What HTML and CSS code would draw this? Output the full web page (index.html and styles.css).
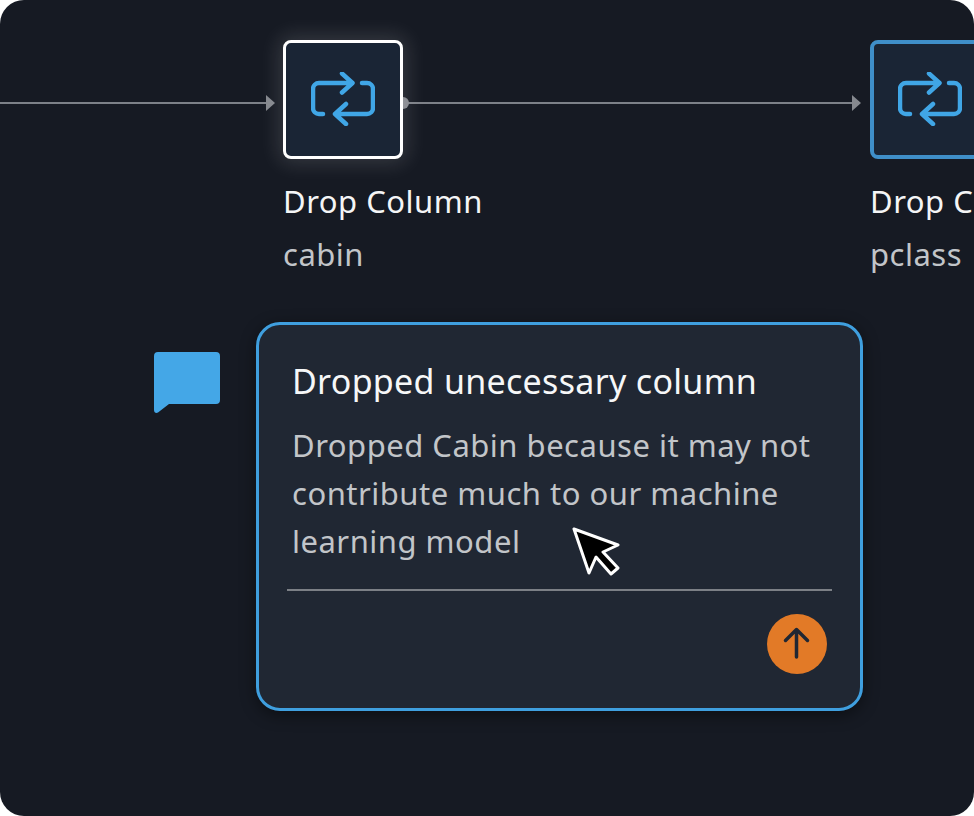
FILE: index.html
```html
<!DOCTYPE html>
<html lang="en">
<head>
<meta charset="utf-8">
<title>Drop Column</title>
<link rel="stylesheet" href="styles.css">
</head>
<body>
<main class="canvas">
  <svg class="edges" width="974" height="816" viewBox="0 0 974 816" aria-hidden="true">
    <path class="edge" d="M0 103H268M408 103H854"/>
    <path class="head" d="M266 95l9 8-9 8zM852 95l9 8-9 8z"/>
    <path class="head" d="M403 97a6 6 0 0 1 0 12z"/>
  </svg>

  <section class="node node-first">
    <div class="node-box node-box-selected">
      <svg class="swap" viewBox="0 0 64 54"><path d="M12 42H8a6 6 0 0 1-6-6V17a6 6 0 0 1 6-6H41M31 1.500l10.500 9.500-10.500 9.500M51 11h5a6 6 0 0 1 6 6V36a6 6 0 0 1-6 6H24M35 32l-11 10 11 10"/></svg>
    </div>
    <div class="node-title">Drop Column</div>
    <div class="node-sub">cabin</div>
  </section>

  <section class="node node-second">
    <div class="node-box node-box-idle">
      <svg class="swap" viewBox="0 0 64 54"><path d="M12 42H8a6 6 0 0 1-6-6V17a6 6 0 0 1 6-6H41M31 1.500l10.500 9.500-10.500 9.500M51 11h5a6 6 0 0 1 6 6V36a6 6 0 0 1-6 6H24M35 32l-11 10 11 10"/></svg>
    </div>
    <div class="node-title">Drop Column</div>
    <div class="node-sub">pclass</div>
  </section>

  <svg class="bubble" viewBox="0 0 66 61" aria-hidden="true"><path d="M4 0H62a4 4 0 0 1 4 4V48a4 4 0 0 1-4 4H15L4 60.500C2 61.500 0 60.500 0 58V4a4 4 0 0 1 4-4z"/></svg>

  <article class="note">
    <h2 class="note-title">Dropped unecessary column</h2>
    <p class="note-body">Dropped Cabin because it may not contribute much to our machine learning model</p>
    <hr class="note-rule">
    <div class="note-actions">
      <button class="send" type="button" aria-label="Send">
        <svg viewBox="0 0 60 60" width="60" height="60"><path d="M29.500 43V15.500M18.500 26.500l11-11 11 11"/></svg>
      </button>
    </div>
  </article>

  <svg class="cursor" viewBox="0 0 50 50" aria-hidden="true"><path d="M3 3L47 19 32 26 47 42 40 48 25 31 18 47z"/></svg>
</main>
</body>
</html>
```
FILE: styles.css
```css
* { box-sizing: border-box; }
html, body { margin: 0; padding: 0; background: #fff; }
body { width: 974px; height: 816px; overflow: hidden; font-family: "Noto Sans", "Open Sans", sans-serif; }

.canvas {
  position: relative;
  width: 974px;
  height: 816px;
  overflow: hidden;
  background: #161a23;
  border-radius: 24px;
  color: #fff;
}

.edges { position: absolute; left: 0; top: 0; }
.edge { fill: none; stroke: #7d8188; stroke-width: 2; }
.head { fill: #85888e; }

.node { position: absolute; top: 40px; width: 240px; }
.node-first { left: 283px; }
.node-second { left: 870px; }

.node-box {
  display: flex;
  align-items: center;
  justify-content: center;
  width: 120px;
  height: 119px;
  background: #1a2535;
  border-radius: 8px;
}
.node-box-selected {
  border: 3px solid #fff;
  box-shadow: 0 0 20px 5px rgba(255, 255, 255, .13);
}
.node-box-idle { border: 4px solid #3f8fc9; }

.swap { flex: none; width: 64px; height: 54px; margin-bottom: 1px; }
.swap path {
  fill: none;
  stroke: #40a6e6;
  stroke-width: 4.500;
  stroke-linecap: round;
  stroke-linejoin: round;
}

.node-title {
  margin-top: 22px;
  font-size: 31px;
  letter-spacing: .5px;
  line-height: 40px;
  color: #f4f5f6;
  white-space: nowrap;
}
.node-sub {
  margin-top: 13px;
  font-size: 31px;
  letter-spacing: .5px;
  line-height: 40px;
  color: #c2c5c9;
  white-space: nowrap;
}

.bubble { position: absolute; left: 154px; top: 352px; width: 66px; height: 61px; }
.bubble path { fill: #44a7e7; }

.note {
  position: absolute;
  left: 256px;
  top: 322px;
  width: 607px;
  height: 389px;
  padding: 34px 28px 0;
  background: #202733;
  border: 3px solid #3f9fdf;
  border-radius: 24px;
  box-shadow: 0 4px 16px rgba(0, 0, 0, .45);
}
.note-title {
  margin: 0 0 0 5px;
  font-size: 34px;
  letter-spacing: .3px;
  font-weight: 400;
  line-height: 44px;
  color: #f6f7f8;
  white-space: nowrap;
}
.note-body {
  margin: 18px 0 0 5px;
  width: 530px;
  font-size: 31px;
  letter-spacing: .5px;
  line-height: 48px;
  color: #c2c5c9;
}
.note-rule {
  height: 2px;
  margin: 24px 0 0;
  border: 0;
  background: #7c8086;
}
.note-actions { display: flex; justify-content: flex-end; margin-top: 23px; padding-right: 5px; }
.send {
  display: block;
  width: 60px;
  height: 60px;
  padding: 0;
  border: 0;
  border-radius: 50%;
  background: #e27a27;
}
.send svg { display: block; }
.send path {
  fill: none;
  stroke: #202733;
  stroke-width: 3.500;
  stroke-linecap: round;
  stroke-linejoin: round;
}

.cursor { position: absolute; left: 571px; top: 526px; width: 50px; height: 50px; }
.cursor path { fill: #000; stroke: #fff; stroke-width: 3; stroke-linejoin: round; }
```
